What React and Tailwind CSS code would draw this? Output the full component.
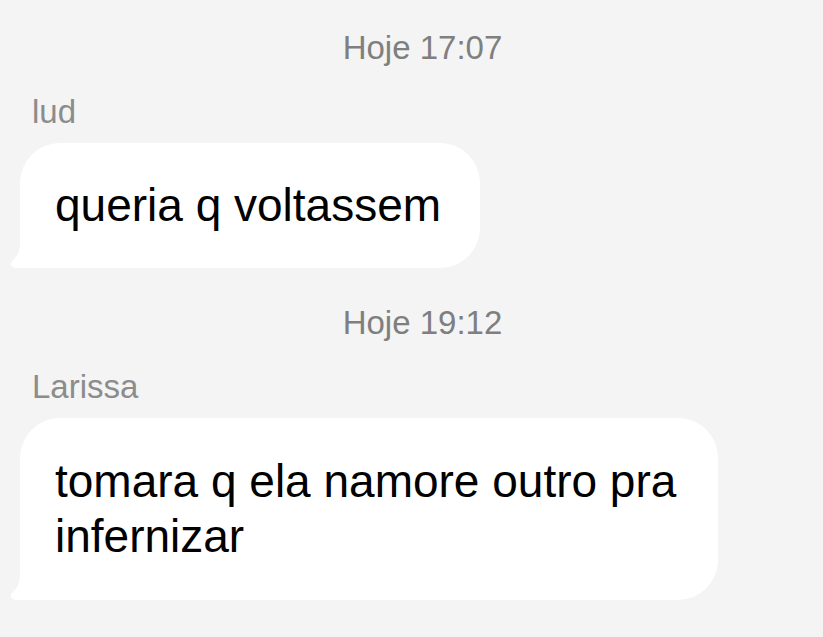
const Tail = () => (
    <svg
        className="absolute left-[-10px] bottom-0"
        width="22"
        height="30"
        viewBox="0 0 22 30"
    >
        <path d="M10 0 L22 0 L22 30 L8 30 Q2 30 1 27 Q0 24 4 21 Q10 16 10 4 Z" fill="#ffffff" />
    </svg>
);

const Timestamp = ({ children, className }) => (
    <div className={"pl-[22px] text-center text-[33px] leading-[40px] text-[#7f7f7f] " + className}>
        {children}
    </div>
);

const Sender = ({ children }) => (
    <div className="ml-[12px] mt-[24px] text-[33px] leading-[40px] text-[#8c8c8c]">{children}</div>
);

const Bubble = ({ children, className }) => (
    <div
        className={
            "relative mt-[11px] w-fit rounded-[40px] rounded-bl-[6px] bg-white pl-[35px] pr-[39px] py-[35px] text-[46px] leading-[55px] text-black " +
            className
        }
    >
        <Tail />
        {children}
    </div>
);

const App = () => {
    return (
        <div
            className="h-[637px] w-[823px] overflow-hidden bg-[#f4f4f4] px-[20px] pt-[28px]"
            style={{ fontFamily: '"Liberation Sans", Arial, sans-serif' }}
        >
            <Timestamp>Hoje 17:07</Timestamp>
            <Sender>lud</Sender>
            <Bubble>queria q voltassem</Bubble>

            <Timestamp className="mt-[35px]">Hoje 19:12</Timestamp>
            <Sender>Larissa</Sender>
            <Bubble className="max-w-[698px] py-[36px]">tomara q ela namore outro pra infernizar</Bubble>
        </div>
    );
};

export default App;
